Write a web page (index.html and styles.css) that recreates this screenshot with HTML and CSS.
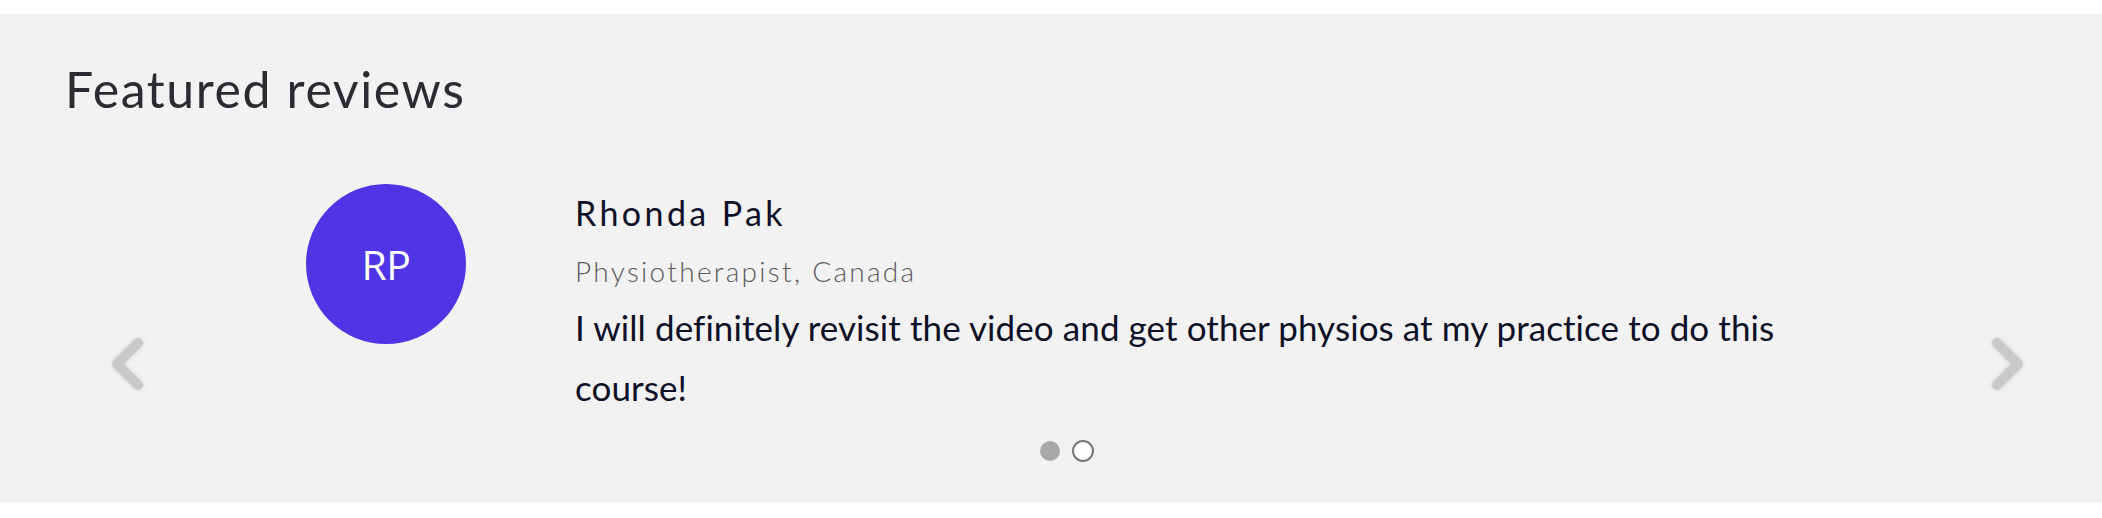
FILE: index.html
```html
<!DOCTYPE html>
<html lang="en">
<head>
<meta charset="utf-8">
<title>Featured reviews</title>
<link rel="stylesheet" href="styles.css">
</head>
<body>
<section class="reviews">
  <h2 class="reviews-title">Featured reviews</h2>
  <div class="carousel">
    <button class="arrow arrow-prev" aria-label="Previous">
      <svg width="32" height="52" viewBox="0 0 32 52"><polyline points="26,5 5,26 26,47" fill="none" stroke="currentColor" stroke-width="10" stroke-linecap="round" stroke-linejoin="round"/></svg>
    </button>
    <div class="slide">
      <div class="avatar">RP</div>
      <div class="review-body">
        <div class="review-name">Rhonda Pak</div>
        <div class="review-role">Physiotherapist, Canada</div>
        <p class="review-text">I will definitely revisit the video and get other physios at my practice to do this course!</p>
      </div>
    </div>
    <button class="arrow arrow-next" aria-label="Next">
      <svg width="32" height="52" viewBox="0 0 32 52"><polyline points="6,5 27,26 6,47" fill="none" stroke="currentColor" stroke-width="10" stroke-linecap="round" stroke-linejoin="round"/></svg>
    </button>
    <div class="dots">
      <span class="dot dot-active"></span>
      <span class="dot"></span>
    </div>
  </div>
</section>
</body>
</html>
```
FILE: styles.css
```css
html, body {
  margin: 0;
  padding: 0;
  background: #ffffff;
}
body {
  font-family: "Lato", "Noto Sans", sans-serif;
  height: 518px;
  overflow: hidden;
}
.reviews {
  margin-top: 14px;
  height: 488px;
  box-sizing: border-box;
  background: #f2f2f2;
  padding: 45px 65px 0 65px;
}
.reviews-title {
  margin: 0;
  font-size: 50px;
  line-height: 60px;
  font-weight: 400;
  color: #2a2c31;
  letter-spacing: 1.6px;
}
.carousel {
  position: relative;
  margin-top: 65px;
}
.slide {
  display: flex;
  align-items: flex-start;
  padding-left: 241px;
}
.avatar {
  flex: 0 0 auto;
  width: 160px;
  height: 160px;
  border-radius: 50%;
  background: #5035e6;
  color: #ffffff;
  display: flex;
  align-items: center;
  justify-content: center;
  font-family: "Open Sans", "Noto Sans", sans-serif;
  font-size: 41px;
  letter-spacing: -0.5px;
}
.review-body {
  margin-left: 109px;
  padding-top: 7px;
  width: 1230px;
}
.review-name {
  font-size: 34px;
  line-height: 44px;
  color: #0d1026;
  letter-spacing: 3.4px;
}
.review-role {
  margin-top: 16px;
  font-size: 28px;
  line-height: 40px;
  color: #5a5a5a;
  font-weight: 300;
  letter-spacing: 2.3px;
}
.review-text {
  margin: 6px 0 0 0;
  font-size: 35px;
  line-height: 60px;
  color: #0d1026;
  letter-spacing: 0.08px;
}
.arrow {
  position: absolute;
  top: 154px;
  width: 32px;
  height: 52px;
  padding: 0;
  border: 0;
  background: transparent;
  color: #c9c9c9;
  filter: drop-shadow(0 0 2px rgba(0, 0, 0, 0.12));
  cursor: pointer;
}
.arrow svg {
  display: block;
}
.arrow-prev {
  left: 47px;
}
.arrow-next {
  right: 14px;
}
.dots {
  display: flex;
  justify-content: center;
  align-items: center;
  gap: 12px;
  margin-top: 23px;
  padding-left: 32px;
}
.dot {
  width: 22px;
  height: 22px;
  box-sizing: border-box;
  border-radius: 50%;
  border: 2px solid #777777;
  background: #ffffff;
}
.dot-active {
  width: 20px;
  height: 20px;
  border: 0;
  background: #a8a8a8;
}
```
